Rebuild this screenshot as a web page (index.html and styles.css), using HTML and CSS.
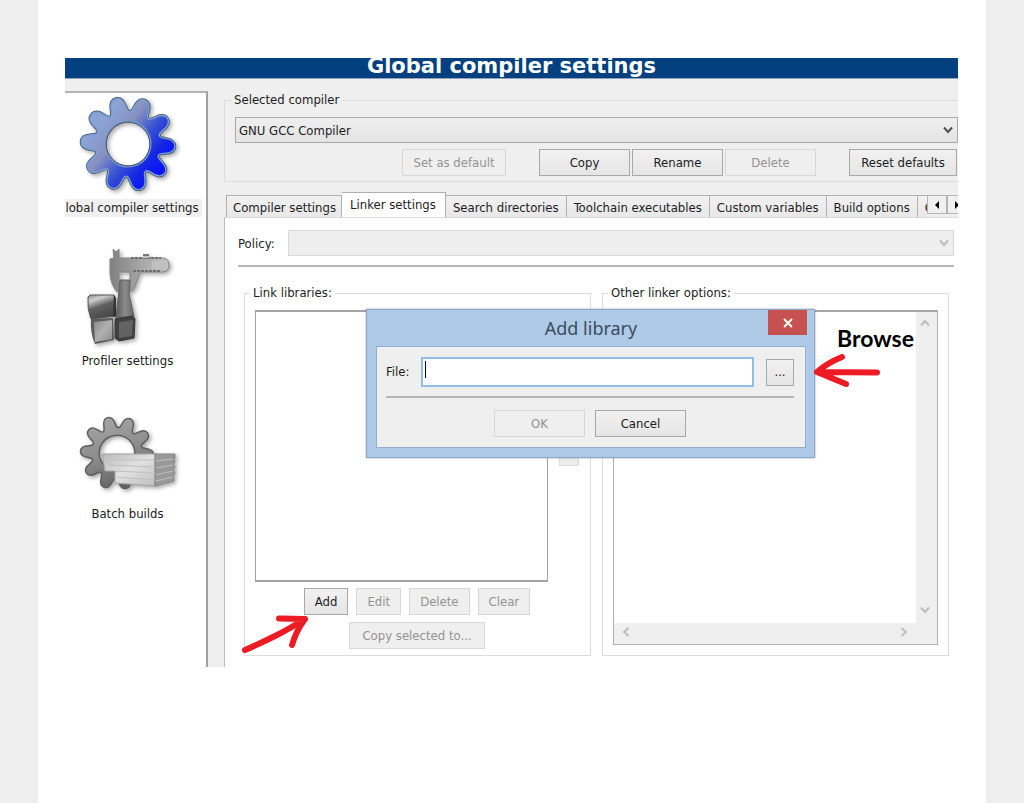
FILE: index.html
```html
<!DOCTYPE html>
<html lang="en">
<head>
<meta charset="utf-8">
<title>Global compiler settings</title>
<link rel="stylesheet" href="styles.css">
</head>
<body>
<svg class="defs" aria-hidden="true">
  <defs>
    <path id="gear" fill-rule="evenodd" d="M-8-38.5Q-7-49.5 0-49.5Q7-49.5 8-38.5Q9-27.6 16.3-35.9Q23.5-44.1 29.1-40Q34.7-36 29.1-26.5Q23.5-17 34.2-19.5Q44.9-21.9 47-15.3Q49.2-8.7 39.1-4.4Q29 0 39.1 4.4Q49.2 8.7 47 15.3Q44.9 21.9 34.2 19.5Q23.5 17 29.1 26.5Q34.7 36 29.1 40Q23.5 44.1 16.3 35.9Q9 27.6 8 38.5Q7 49.5 0 49.5Q-7 49.5-8 38.5Q-9 27.6-16.3 35.9Q-23.5 44.1-29.1 40Q-34.7 36-29.1 26.5Q-23.5 17-34.2 19.5Q-44.9 21.9-47 15.3Q-49.2 8.7-39.1 4.4Q-29 0-39.1-4.4Q-49.2-8.7-47-15.3Q-44.9-21.9-34.2-19.5Q-23.5-17-29.1-26.5Q-34.7-36-29.1-40Q-23.5-44.1-16.3-35.9Q-9-27.6-8-38.5ZM24 0A24 24 0 1 0-24 0A24 24 0 1 0 24 0Z"/>
    <linearGradient id="blue" gradientUnits="userSpaceOnUse" x1="-38" y1="-4" x2="40" y2="22">
      <stop offset="0" stop-color="#8ba4d6"/><stop offset=".3" stop-color="#8791c0"/><stop offset=".55" stop-color="#3c55d2"/><stop offset=".8" stop-color="#1425e4"/><stop offset="1" stop-color="#0a12ff"/>
    </linearGradient>
    <linearGradient id="grey" gradientUnits="userSpaceOnUse" x1="-30" y1="-40" x2="30" y2="40">
      <stop offset="0" stop-color="#a5a5a5"/><stop offset=".5" stop-color="#8b8b8b"/><stop offset="1" stop-color="#606060"/>
    </linearGradient>
    <linearGradient id="cubeDark" x1="0" y1="0" x2=".4" y2="1"><stop offset="0" stop-color="#8a8a8a"/><stop offset=".25" stop-color="#d0d0d0"/><stop offset=".55" stop-color="#626262"/><stop offset="1" stop-color="#484848"/></linearGradient>
    <linearGradient id="cubeLight" x1="0" y1="0" x2="1" y2="1"><stop offset="0" stop-color="#8a8a8a"/><stop offset=".5" stop-color="#b0b0b0"/><stop offset="1" stop-color="#8d8d8d"/></linearGradient>
    <linearGradient id="pillar" x1="0" y1="0" x2="1" y2="0"><stop offset="0" stop-color="#5a5a5a"/><stop offset=".5" stop-color="#8c8c8c"/><stop offset="1" stop-color="#666"/></linearGradient>
    <linearGradient id="steel" x1="0" y1="0" x2="1" y2="0"><stop offset="0" stop-color="#808080"/><stop offset=".5" stop-color="#a5a5a5"/><stop offset="1" stop-color="#c4c4c4"/></linearGradient>
    <linearGradient id="paper" x1="0" y1="0" x2="1" y2="1"><stop offset="0" stop-color="#b9b9b9"/><stop offset=".5" stop-color="#e2e2e2"/><stop offset="1" stop-color="#bdbdbd"/></linearGradient>
  </defs>
</svg>
<main class="page">
  <section class="shot">
    <h1 class="banner">Global compiler settings</h1>
    <div class="body">
      <nav class="sidebar">
        <ul class="categories">
          <li class="category">
            <svg class="category-icon" viewBox="0 0 110 104" aria-hidden="true">
              <g transform="translate(55 51) rotate(21) scale(.95)">
                <use href="#gear" fill="#34506e" stroke="#34506e" stroke-width="3"/>
                <use href="#gear" fill="url(#blue)" stroke="#7d9fd0" stroke-width="1.500"/>
              </g>
              <circle cx="55" cy="51" r="22" fill="none" stroke="#4c5f7c" stroke-width="1"/>
            </svg>
            <a class="category-label current" href="#global">Global compiler settings</a>
          </li>
          <li class="category">
            <svg class="category-icon" viewBox="0 0 110 104" aria-hidden="true">
              <path d="M40 3l3 3 3-3v9h43q7 0 7 7t-7 7H67l-5 14q-2 6-5 5V26H46v10q0 8-2 10-6-7-7-18V13l4-1z" fill="url(#steel)" stroke="#858585" stroke-width="1"/>
              <path d="M58 12h30M60 25h28" stroke="#707070" stroke-width="2" stroke-dasharray="3 1"/>
              <path d="M70 8h6v4h-6zM79 15h14v8H79z" fill="#c0c0c0"/>
              <path d="M70 9h6" stroke="#777" stroke-width="2"/>
              <path d="M47 34h10l-1 14 5 22-18 2z" fill="url(#pillar)" stroke="#606060" stroke-width="1"/>
              <path d="M17 49l24 0 2 21-25 3q-4-10-3-22z" fill="url(#cubeDark)" stroke="#555"/>
              <path d="M41 49l2 3v18l-3 1z" fill="#333"/>
              <path d="M18 73l22-1 1 22-19 4q-5-11-4-25z" fill="#5c5c5c"/>
              <path d="M21 76l18-2v19l-17 3z" fill="url(#cubeLight)"/>
              <path d="M42 73l18-3 2 3-1 19-15 3-4-3z" fill="#404040" stroke="#383838"/>
              <path d="M46 76l14-2-1 16-13 2z" fill="#626262"/>
            </svg>
            <a class="category-label" href="#profiler">Profiler settings</a>
          </li>
          <li class="category">
            <svg class="category-icon" viewBox="0 0 110 104" aria-hidden="true">
              <g transform="translate(44 54) rotate(21) scale(.74)">
                <use href="#gear" fill="url(#grey)" stroke="#5f5f5f" stroke-width="2"/>
              </g>
              <path d="M29 55h53v32l-40-3V72H32z" fill="url(#paper)" stroke="#a5a5a5"/>
              <path d="M82 55h20v4l-2 1 2 3-2 2 2 3-2 3 2 3-2 3 1 5-19 5z" fill="#999" stroke="#858585"/>
              <path d="M34 61h48M36 66l46 2M42 72l40 2M43 78l39 3M83 62l17-2M83 69l17-3M83 76l17-4M83 82l17-4" stroke="#c0c0c0" fill="none"/>
            </svg>
            <a class="category-label" href="#batch">Batch builds</a>
          </li>
        </ul>
      </nav>
      <div class="settings">
        <fieldset class="group compiler">
          <legend>Selected compiler</legend>
          <div class="combo">
            <select aria-label="Selected compiler"><option>GNU GCC Compiler</option></select>
            <svg class="chevron" viewBox="0 0 10 8" aria-hidden="true"><path d="M1 1.500L5 6 9 1.500"/></svg>
          </div>
          <div class="compiler-actions">
            <button class="btn set-default" disabled>Set as default</button>
            <div class="trio">
              <button class="btn wide">Copy</button>
              <button class="btn wide">Rename</button>
              <button class="btn wide" disabled>Delete</button>
            </div>
            <button class="btn reset">Reset defaults</button>
          </div>
        </fieldset>
        <div class="tabbar">
          <div class="tabs" role="tablist">
            <button class="tab first" role="tab">Compiler settings</button>
            <button class="tab active" role="tab" aria-selected="true">Linker settings</button>
            <button class="tab" role="tab">Search directories</button>
            <button class="tab" role="tab">Toolchain executables</button>
            <button class="tab" role="tab">Custom variables</button>
            <button class="tab" role="tab">Build options</button>
            <button class="tab" role="tab">Other settings</button>
          </div>
          <div class="tab-scroll">
            <button class="scroll-btn" aria-label="Previous tabs"><svg viewBox="0 0 6 8" aria-hidden="true"><path d="M5 0v8L1 4z"/></svg></button>
            <button class="scroll-btn" aria-label="Next tabs"><svg viewBox="0 0 6 8" aria-hidden="true"><path d="M1 0v8l4-4z"/></svg></button>
          </div>
        </div>
        <div class="panel">
          <div class="policy">
            <label for="policy">Policy:</label>
            <div class="combo">
              <select id="policy" disabled><option></option></select>
              <svg class="chevron" viewBox="0 0 10 8" aria-hidden="true"><path d="M1 1.500L5 6 9 1.500"/></svg>
            </div>
          </div>
          <hr class="rule">
          <div class="columns">
            <fieldset class="group libraries">
              <legend>Link libraries:</legend>
              <div class="library-row">
                <div class="library-list" role="listbox" aria-label="Link libraries"></div>
                <button class="mover" disabled aria-label="Move down"></button>
              </div>
              <div class="library-actions">
                <button class="btn">Add</button>
                <button class="btn" disabled>Edit</button>
                <button class="btn" disabled>Delete</button>
                <button class="btn" disabled>Clear</button>
              </div>
              <div class="copy-row"><button class="btn" disabled>Copy selected to...</button></div>
            </fieldset>
            <fieldset class="group options">
              <legend>Other linker options:</legend>
              <div class="editor">
                <textarea aria-label="Other linker options"></textarea>
                <div class="vbar">
                  <svg class="arrow" viewBox="0 0 10 8" aria-hidden="true"><path d="M1 6.500L5 2 9 6.500"/></svg>
                  <svg class="arrow" viewBox="0 0 10 8" aria-hidden="true"><path d="M1 1.500L5 6 9 1.500"/></svg>
                </div>
                <div class="hbar">
                  <svg class="arrow" viewBox="0 0 8 10" aria-hidden="true"><path d="M6.500 1L2 5l4.500 4"/></svg>
                  <svg class="arrow" viewBox="0 0 8 10" aria-hidden="true"><path d="M1.500 1L6 5 1.500 9"/></svg>
                </div>
              </div>
            </fieldset>
          </div>
        </div>
      </div>
    </div>

    <div class="dialog" role="dialog" aria-labelledby="dialog-title">
      <h2 class="dialog-title" id="dialog-title">Add library</h2>
      <button class="close" aria-label="Close"><svg viewBox="0 0 10 10" aria-hidden="true"><path d="M1 1l8 8M9 1L1 9"/></svg></button>
      <div class="dialog-body">
        <div class="file-row">
          <label for="file">File:</label>
          <div class="file-field"><input id="file" type="text"><span class="caret"></span></div>
          <button class="btn browse">...</button>
        </div>
        <hr class="rule">
        <div class="dialog-actions">
          <button class="btn wide" disabled>OK</button>
          <button class="btn wide">Cancel</button>
        </div>
      </div>
    </div>

    <span class="note">Browse</span>
    <svg class="mark mark-browse" viewBox="0 0 70 36" aria-hidden="true"><path d="M64 18.500L4 18M29 3Q14 9 4 18Q16 23 33 30"/></svg>
    <svg class="mark mark-add" viewBox="0 0 72 40" aria-hidden="true"><path d="M4 36Q20 29 34 22T64 5M38 4.500L64 5Q55 17 51 31"/></svg>
  </section>
</main>
</body>
</html>
```
FILE: styles.css
```css
* { box-sizing: border-box; }
body {
  margin: 0;
  background: #efefef;
  color: #1c1c24;
  font: 13px/16px "DejaVu Sans Condensed", "DejaVu Sans", sans-serif;
}
button, select, input, textarea { font: inherit; color: inherit; }
.defs { position: absolute; width: 0; height: 0; }
.page {
  min-height: 100vh;
  margin: 0 38px;
  padding: 58px 28px 58px 27px;
  background: #fff;
}
.shot { position: relative; }
.banner {
  height: 21px;
  margin: 0;
  overflow: hidden;
  background: #024080;
  border-bottom: 1px solid #8fa3ba;
  color: #fff;
  font: bold 21px/16px "DejaVu Sans", sans-serif;
  text-align: center;
  white-space: nowrap;
}
.body {
  display: flex;
  gap: 16px;
  overflow: hidden;
  background: #efefef;
}
.sidebar {
  flex: none;
  width: 143px;
  margin-top: 12px;
  overflow: hidden;
  background: #fff;
  border-top: 2px solid #b4b4b4;
  border-right: 2px solid #a0a0a0;
}
.categories {
  display: flex;
  flex-direction: column;
  gap: 29px;
  margin: 0 0 0 -16px;
  padding: 0;
  list-style: none;
}
.category { display: flex; flex-direction: column; align-items: center; gap: 2px; }
.category-icon { width: 110px; height: 104px; filter: drop-shadow(2px 2px 2px rgba(0, 0, 0, .35)); }
.category-label {
  padding: 1px 3px;
  color: inherit;
  text-decoration: none;
  white-space: nowrap;
}
.current { background: #f0f0f0; }
.settings { flex: 1; min-width: 0; padding-top: 13px; }

.group { min-width: 0; margin: 0; border: 1px solid #dcdcdc; }
.group legend { height: 16px; padding: 0 3px; }
.compiler { padding: 9px 0 5px 10px; border-right: 0; }
.compiler legend { margin-left: -4px; }
.combo { position: relative; flex: 1; }
.combo select {
  display: block;
  width: 100%;
  height: 26px;
  padding: 2px 3px 0;
  appearance: none;
  background: linear-gradient(#f0f0f0, #e3e3e3);
  border: 1px solid #a9a9a9;
  border-radius: 0;
  opacity: 1;
}
.combo select:disabled { background: #eee; border-color: #dadada; }
.chevron {
  position: absolute;
  top: 9px;
  right: 5px;
  width: 10px;
  height: 8px;
  fill: none;
  stroke: #505050;
  stroke-width: 2;
}
select:disabled + .chevron { stroke: #bcbcbc; }
.compiler-actions {
  display: flex;
  justify-content: flex-end;
  gap: 33px;
  margin-top: 6px;
  padding-right: 1px;
}
.trio { display: flex; gap: 2px; }
.btn {
  height: 27px;
  padding: 1px 8px 0;
  background: linear-gradient(#f1f1f1, #e5e5e5);
  border: 1px solid #a8a8a8;
  border-radius: 0;
  white-space: nowrap;
}
.btn:disabled { background: #efefef; border-color: #d8d8d8; color: #939393; }
.wide { width: 91px; }
.set-default { width: 104px; }
.reset { width: 108px; }

.tabbar { display: flex; align-items: flex-end; margin-top: 10px; padding-left: 2px; }
.tabs { display: flex; flex: 1; align-items: flex-end; min-width: 0; height: 25px; overflow: hidden; }
.tab {
  flex: none;
  height: 22px;
  padding: 2px 7px 0;
  background: linear-gradient(#f1f1f1, #e8e8e8);
  border: 1px solid #b0b0b0;
  border-width: 1px 1px 0 0;
}
.first { padding: 2px 5px 0 6px; border-left-width: 1px; }
.active { height: 25px; padding: 0 9px 0 8px; background: #fff; }
.tab-scroll { display: flex; flex: none; align-items: flex-start; width: 31px; height: 22px; overflow: hidden; }
.scroll-btn {
  flex: none;
  width: 20px;
  height: 19px;
  padding: 0;
  background: #f0f0f0;
  border: 1px solid #b4b4b4;
}
.scroll-btn svg { display: block; width: 6px; height: 8px; margin: 0 auto; }

.panel {
  padding: 12px 4px 11px 13px;
  background: #fff;
  border-top: 1px solid #dcdcdc;
  border-left: 1px solid #bcbcbc;
}
.policy { display: flex; align-items: center; gap: 13px; }
.policy label { padding-top: 2px; }
.rule { height: 2px; margin: 9px 0 0; border: 0; background: #b6b6b6; }
.columns { display: grid; grid-template-columns: 1fr 1fr; gap: 11px; margin: 18px 5px 0 6px; }
.libraries { padding: 9px 11px 6px 10px; }
.options { padding: 9px 10px 10px; }
.libraries legend, .options legend { margin-left: -5px; }
.library-row { display: flex; align-items: center; gap: 11px; }
.library-list { flex: 1; height: 272px; background: #fff; border: 2px solid #a3a3a3; border-width: 2px 1px; }
.mover { width: 20px; height: 40px; background: #ececec; border: 1px solid #dcdcdc; }
.library-actions { display: flex; justify-content: center; gap: 8px; margin-top: 6px; }
.library-actions .btn { padding: 1px 10px 0; }
.copy-row { display: flex; justify-content: center; margin-top: 7px; }
.copy-row .btn { padding: 1px 12px 0; }
.editor {
  display: grid;
  grid-template: 1fr 21px / 1fr 21px;
  height: 335px;
  background: #efefef;
  border: 1px solid #b0b0b0;
  border-top: 2px solid #a8a8a8;
}
.editor textarea { width: 100%; height: 100%; border: 0; outline: 0; resize: none; background: #fff; }
.vbar { display: flex; flex-direction: column; justify-content: space-between; align-items: center; padding: 6px 3px 8px 0; }
.hbar { display: flex; justify-content: space-between; align-items: center; padding: 0 7px 4px; }
.arrow { width: 10px; height: 10px; fill: none; stroke: #bdbdbd; stroke-width: 2; }

.dialog {
  position: absolute;
  top: 251px;
  left: 301px;
  width: 449px;
  padding: 0 8px 9px 9px;
  background: #aecae7;
  border: 1px solid #8ba6c4;
  box-shadow: 0 0 2px rgba(60, 80, 110, .5);
}
.dialog-title {
  margin: 0;
  color: #3c4c60;
  font: 18px/36px "Noto Sans", sans-serif;
  text-align: center;
}
.close {
  position: absolute;
  top: 0;
  right: 7px;
  width: 39px;
  height: 25px;
  padding: 0;
  background: #c75050;
  border: 0;
}
.close svg { display: block; width: 10px; height: 10px; margin: 0 auto; stroke: #fff; stroke-width: 2; }
.dialog-body { padding: 10px 11px 10px 9px; background: #efefef; border: 1px solid #93afcd; }
.file-row { display: flex; align-items: center; gap: 12px; }
.file-field { position: relative; flex: 1; }
.file-field input {
  display: block;
  width: 100%;
  height: 30px;
  padding: 0 6px;
  background: #fff;
  border: 2px solid #8fbfe6;
  outline: 0;
}
.caret { position: absolute; top: 4px; left: 4px; width: 1px; height: 17px; background: #000; }
.browse { width: 28px; padding: 0; }
.dialog-actions { display: flex; justify-content: center; gap: 10px; margin-top: 12px; }

.note {
  position: absolute;
  top: 266px;
  right: 44px;
  color: #000;
  font: bold 23px/28px Lato, sans-serif;
}
.mark { position: absolute; fill: none; stroke: #ed1c24; stroke-width: 6; stroke-linecap: round; stroke-linejoin: round; }
.mark-browse { top: 296px; left: 748px; width: 70px; height: 36px; }
.mark-add { top: 556px; left: 176px; width: 72px; height: 40px; }
```
